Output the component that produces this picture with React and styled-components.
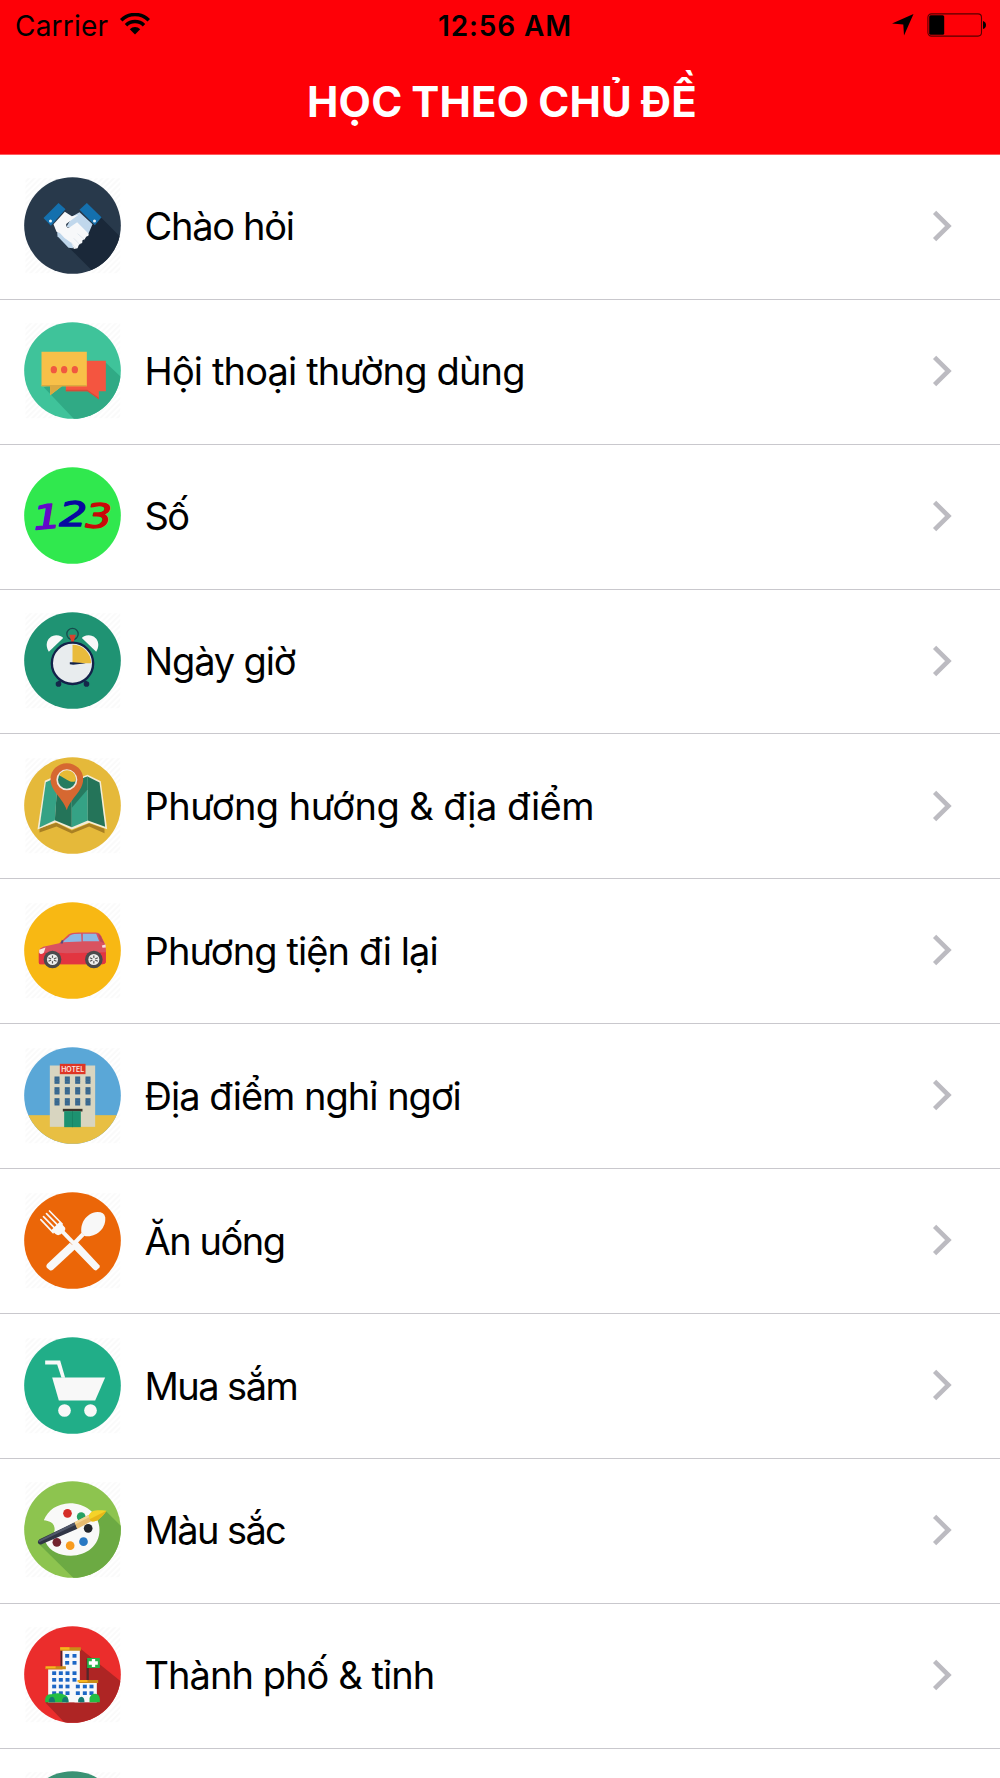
import React from 'react';
import styled, { createGlobalStyle } from 'styled-components';

// Each icon keeps its own drawing coordinates: a disc of radius 145 centred on (218, cy).
const Disc = ({ cy, color, plain, children }) => (
  <TopicIcon viewBox={`72.5 ${cy - 145.5} 291 291`}>
    <defs>
      <clipPath id={`disc-${color.slice(1)}`}>
        <circle cx="218" cy={cy} r="145" />
      </clipPath>
      <pattern id="hatch" width="12" height="12" patternUnits="userSpaceOnUse" patternTransform="rotate(45)">
        <rect width="6" height="12" fill="#fafafa" />
      </pattern>
    </defs>
    {!plain && <rect x="77" y={cy - 142} width="284" height="285" fill="url(#hatch)" />}
    <g clipPath={`url(#disc-${color.slice(1)})`}>
      <rect x="70" y={cy - 150} width="300" height="300" fill={color} />
      {children}
    </g>
  </TopicIcon>
);

const HandshakeIcon = () => (
  <Disc cy={211.5} color="#28394b">
    <path d="M300 184L365 249V357H287L205 275Z" fill="#1a2839" />
    <path d="M176 144L197 163L153 212L131 189Z" fill="#1470ae" />
    <path d="M261 144L305 187L285 211L239 164Z" fill="#1470ae" />
    <path d="M239 172L278 208L264 240L235 225L200 215L218 184Z" fill="#c0d7ec" />
    <path d="M172 232L188 226L222 262L219 280L206 278L173 244Z" fill="#bdd5ea" />
    <path
      d="M195 170L216 184L236 179L199 207Q198 221 210 217L232 202L265 235Q270 243 259 245L255 252L248 256L247 264L238 268L233 280L222 282L215 264L194 249L180 234L170 230L161 208Z"
      fill="#f7f8fa"
    />
    <path d="M233 236L254 254M222 250L240 269M213 262L227 279" stroke="#d7e0e8" strokeWidth="2" />
    <circle cx="152" cy="198" r="4.5" fill="#e4f2fb" />
    <circle cx="284" cy="198" r="4.5" fill="#e4f2fb" />
  </Disc>
);

const ChatIcon = () => (
  <Disc cy={646.5} color="#3fc39a">
    <path d="M318 623L370 672V800H230L132 697Z" fill="#30aa85" />
    <path d="M198 617H318V709H297V733L263 709H198Z" fill="#f45540" />
    <path d="M198 704H262L297 728V733L263 709H198Z" fill="#d54b38" />
    <path d="M125 590H261V694H186L151 721V694H125Z" fill="#f8c048" />
    <path d="M125 690H261V694H186L151 721V694H125Z" fill="#dba940" />
    <ellipse cx="162" cy="644" rx="9.5" ry="11" fill="#f05840" />
    <ellipse cx="193" cy="644" rx="9.5" ry="11" fill="#f05840" />
    <ellipse cx="225" cy="644" rx="9.5" ry="11" fill="#f05840" />
  </Disc>
);

const NumberIcon = () => (
  <Disc cy={211.5} color="#30e84e" plain>
    <Digit x="100" y="251" fill="#6408c8" stroke="#6408c8" textLength="84" transform="rotate(-5 140 220)">1</Digit>
    <Digit x="178" y="243" fill="#0808a0" stroke="#0808a0" textLength="84">2</Digit>
    <Digit x="257" y="248" fill="#c80808" stroke="#c80808" textLength="80">3</Digit>
  </Disc>
);

const ClockIcon = () => (
  <Disc cy={646.5} color="#1f9373">
    <path d="M147 620C132 597 145 572 169 571C181 571 187 576 190 579Z" fill="#f7f8f8" />
    <path d="M289 620C304 597 291 572 267 571C255 571 249 576 246 579Z" fill="#f7f8f8" />
    <circle cx="218" cy="567" r="17" fill="none" stroke="#164c4c" strokeWidth="4" />
    <path d="M208 569H228L221 592H215Z" fill="#d8422f" />
    <path d="M180 708L176 717M256 708L260 717" stroke="#14284a" strokeWidth="8" />
    <circle cx="176" cy="717" r="8.5" fill="#14284a" />
    <circle cx="260" cy="717" r="8.5" fill="#14284a" />
    <circle cx="218" cy="655" r="62" fill="#e8ecee" stroke="#13224a" strokeWidth="7" />
    <path d="M218 599A56 56 0 0 1 274 655H218Z" fill="#e9bb3c" />
    <path d="M210 652L220 652L258 655L220 659L210 658Z" fill="#13224a" />
  </Disc>
);

const MapIcon = () => (
  <Disc cy={196} color="#e5b93a">
    <path d="M119 264L170 248L216 271L268 249L314 266L314 279L268 259L216 280L170 259L119 277Z" fill="#a98023" />
    <path d="M135 122L174 104L216 122L263 104L303 123L322 267L268 248L216 268L168 246L113 268Z" fill="#f4ecd5" />
    <path d="M138 126L174 110L165 240L119 262Z" fill="#35a285" />
    <path d="M174 110L216 127V261L165 240Z" fill="#247459" />
    <path d="M216 127L263 109L264 241L216 261Z" fill="#35a285" />
    <path d="M263 109L299 127L316 260L264 241Z" fill="#247459" />
    <path d="M216 126L263 109V148L216 203Z" fill="#277a60" />
    <path d="M201 210C190 174 152 153 152 117A49 48 0 0 1 250 117C250 153 212 174 201 210Z" fill="#d66831" />
    <circle cx="201" cy="119" r="29" fill="#257b60" stroke="#f1e6dd" strokeWidth="5" />
    <path d="M178 106A26 26 0 0 1 227 123C210 130 202 116 178 106Z" fill="#e8ba35" />
  </Disc>
);

const CarWheel = ({ cx }) => (
  <g>
    <circle cx={cx} cy="658" r="26.5" fill="#4b4b4d" />
    <circle cx={cx} cy="658" r="16.5" fill="#eeeeec" />
    <path d={`M${cx} 646V670M${cx - 12} 653L${cx + 12} 663M${cx + 12} 653L${cx - 12} 663`} stroke="#555" strokeWidth="3.5" />
    <circle cx={cx} cy="658" r="5" fill="#eeeeec" />
  </g>
);

const CarIcon = () => (
  <Disc cy={631} color="#f8b813">
    <path
      d="M117 668V632Q119 624 130 620L178 609L206 583Q213 577 236 577H287Q299 577 303 586L316 612Q320 630 318 666Q316 672 308 672H125Q117 674 117 668Z"
      fill="#d95260"
    />
    <path d="M117 638Q160 636 200 639L318 636V666Q316 672 308 672H125Q117 674 117 668Z" fill="#e23540" />
    <path d="M187 606L212 585Q219 581 244 581L245 604Z" fill="#8cb9e4" />
    <path d="M249 581H289L298 603H249Z" fill="#8cb9e4" />
    <path d="M295 581L303 588L313 610L301 604Z" fill="#b94859" />
    <path d="M182 610L186 599L191 602L189 610Z" fill="#554a7d" />
    <path d="M118 629L137 622L132 638Q122 645 118 638Z" fill="#f6e9e5" />
    <path d="M306 616L317 613L318 622L308 623Z" fill="#f4dede" />
    <CarWheel cx={158} />
    <CarWheel cx={282} />
  </Disc>
);

const HotelIcon = () => (
  <Disc cy={196} color="#5aa7d7">
    <rect x="70" y="255" width="300" height="90" fill="#e8bf43" />
    <rect x="150" y="106" width="136" height="184" fill="#d8d5c0" />
    <rect x="180" y="101" width="77" height="31" fill="#de3525" />
    <HotelSign x="218.5" y="125" textLength="69" lengthAdjust="spacingAndGlyphs">HOTEL</HotelSign>
    {[139, 171, 204].map((y) =>
      [164, 195, 226, 257].map((x) => (
        <g key={`${x}-${y}`}>
          <rect x={x} y={y} width="15" height="22" fill="#36668d" />
          <path d={`M${x} ${y + 7.5}H${x + 15}M${x} ${y + 15}H${x + 15}`} stroke="#4c7898" strokeWidth="1.5" />
        </g>
      ))
    )}
    <rect x="189" y="236" width="59" height="8" fill="#3b352c" />
    <rect x="193" y="243" width="50" height="48" fill="#1d9270" />
    <path d="M218 243V291" stroke="#187b5e" strokeWidth="2" />
  </Disc>
);

const FoodIcon = () => (
  <Disc cy={630.5} color="#eb6608">
    <path d="M185 601L292 712" stroke="#f8f8f8" strokeWidth="12" />
    <path d="M223 640L231 632L300 706Q301 712 295 715L290 720Q284 721 281 717L214 648Z" fill="#f8f8f8" />
    <path d="M219 634L245 607L254 616L228 643Z" fill="#f8f8f8" />
    <path d="M210 637L229 654L161 717Q154 723 149 719L141 712Q137 707 142 701Z" fill="#f8f8f8" />
    <path
      d="M123 568L160 607M131 559L169 598M140 550L178 589M149 542L187 581"
      stroke="#f8f8f8"
      strokeWidth="5"
      strokeLinecap="round"
    />
    <path d="M154 600L180 574L196 592Q198 601 190 604L183 612Q174 617 168 612Z" fill="#f8f8f8" />
    <path d="M245 608C240 583 256 548 293 545Q313 545 316 560C320 592 291 623 254 617Z" fill="#f8f8f8" />
  </Disc>
);

const CartIcon = () => (
  <Disc cy={195} color="#21ae88">
    <path d="M136 120H181L196 172H185L172 132H136Z" fill="#f8f8f8" />
    <path d="M157 171H316L286 240H177Z" fill="#f8f8f8" />
    <circle cx="194" cy="270" r="19" fill="#f8f8f8" />
    <circle cx="272" cy="270" r="19" fill="#f8f8f8" />
  </Disc>
);

const PaletteIcon = () => (
  <Disc cy={629.5} color="#8dc44f">
    <path d="M318 574L375 630V780H226L118 674Z" fill="#6caa43" />
    <path
      d="M132 602C144 572 172 552 210 551C261 551 299 586 299 631C299 677 261 708 213 708C177 708 151 695 137 668L158 647Q166 638 164 624C161 609 151 605 132 602Z"
      fill="#f9f9f8"
    />
    <circle cx="203" cy="581" r="13" fill="#d52d27" />
    <circle cx="244" cy="591" r="13" fill="#27a163" />
    <circle cx="265" cy="626" r="13" fill="#23262c" />
    <circle cx="171" cy="668" r="13" fill="#72232e" />
    <circle cx="211" cy="678" r="13" fill="#f89b1d" />
    <circle cx="251" cy="666" r="13" fill="#2878c3" />
    <path d="M115 664Q112 670 119 674Q122 676 127 673L233 627L225 608L119 659Z" fill="#303545" />
    <path d="M115 663L225 608L228 615L118 668Z" fill="#51586a" />
    <path d="M224 608L266 586L277 603L232 628Z" fill="#e7bc70" />
    <path d="M224 608L266 586L269 592L227 614Z" fill="#f4d595" />
    <path d="M266 588C275 570 290 571 320 573C306 592 292 608 274 605Z" fill="#f5d329" />
    <path d="M269 599L320 573C306 592 292 608 274 605Z" fill="#e8b719" />
  </Disc>
);

const cityWindows = [
  [196, 163], [218, 163], [196, 184], [218, 184],
  [157, 215], [177, 215], [197, 215], [218, 215],
  [157, 235], [177, 235], [197, 235], [218, 235],
  [157, 255], [177, 255], [197, 255], [228, 255], [249, 255], [269, 255],
  [157, 275], [177, 275], [197, 275], [228, 275], [249, 275], [269, 275],
];

const CityIcon = () => (
  <Disc cy={224.5} color="#eb2d2c">
    <path d="M243 148L375 255V380H205L137 309Z" fill="#ae2524" />
    <path d="M182 153H188V201H182ZM262 177H267V241H260V177Z" fill="#54272a" />
    <rect x="188" y="151" width="52" height="157" fill="#f8f8fa" />
    <rect x="145" y="209" width="53" height="99" fill="#f8f8fa" />
    <rect x="224" y="250" width="67" height="58" fill="#f8f8fa" />
    <path d="M181 143H243V153H181Z" fill="#c98b17" />
    <path d="M181 143H209V150H181ZM137 200H168V208H137ZM233 241H264V248H233Z" fill="#f8b51d" />
    <path d="M168 200H198V209H137V206H168ZM264 241H295V250H237V247H264Z" fill="#c98b17" />
    {cityWindows.map(([x, y]) => (
      <rect key={`${x}-${y}`} x={x} y={y} width="12" height="11" fill="#1c66c5" />
    ))}
    <rect x="262" y="175" width="38" height="30" fill="#24b447" />
    <path d="M276 178H286V185H294V195H286V202H276V195H267V185H276Z" fill="#fff" />
    <path d="M136 308V297Q140 282 155 284Q174 277 190 284Q207 287 206 308Z" fill="#24bd43" />
    <path d="M269 308V295Q273 282 286 282Q300 284 300 299V308Z" fill="#24bd43" />
    <path
      d="M147 308V300Q150 291 157 291Q165 292 166 308ZM187 308V300Q190 291 197 291Q206 292 206 308ZM235 308V300Q238 291 245 291Q254 292 254 308Z"
      fill="#147970"
    />
  </Disc>
);

const NextIcon = () => <Disc cy={224.5} color="#3b9274" />;

const topics = [
  { label: 'Chào hỏi', icon: HandshakeIcon, tracking: -1.3 },
  { label: 'Hội thoại thường dùng', icon: ChatIcon, tracking: -0.85 },
  { label: 'Số', icon: NumberIcon, tracking: -1.6 },
  { label: 'Ngày giờ', icon: ClockIcon, tracking: -1.15 },
  { label: 'Phương hướng & địa điểm', icon: MapIcon, tracking: -0.55 },
  { label: 'Phương tiện đi lại', icon: CarIcon, tracking: -0.88 },
  { label: 'Địa điểm nghỉ ngơi', icon: HotelIcon, tracking: -1.0 },
  { label: 'Ăn uống', icon: FoodIcon, tracking: -1.45 },
  { label: 'Mua sắm', icon: CartIcon, tracking: -1.55 },
  { label: 'Màu sắc', icon: PaletteIcon, tracking: -1.6 },
  { label: 'Thành phố & tỉnh', icon: CityIcon, tracking: -0.95 },
  { label: '', icon: NextIcon, tracking: -0.8 },
];

const App = () => {
  return (
    <Screen>
      <GlobalStyle />
      <Header>
        <StatusBar>
          <StatusLeft>
            <span>Carrier</span>
            <svg width="30" height="22" viewBox="0 0 30 22">
              <path d="M1.2 7.2A19.5 19.5 0 0 1 28.8 7.2M6 12.2A12.8 12.8 0 0 1 24 12.2" fill="none" stroke="#000" strokeWidth="3.5" />
              <path d="M9.8 16.2A7.4 7.4 0 0 1 20.2 16.2L15 21.4Z" />
            </svg>
          </StatusLeft>
          <Time>12:56 AM</Time>
          <StatusRight>
            <svg width="22" height="22" viewBox="0 0 22 22">
              <path d="M21.5 0L12 21.5L11.3 10.4L0 9.6Z" />
            </svg>
            <svg width="60" height="24" viewBox="0 0 60 24">
              <rect x="0.9" y="0.9" width="53.6" height="22.2" rx="3.5" fill="none" stroke="#500" strokeWidth="1.1" />
              <rect x="2.2" y="2.2" width="15" height="19.5" rx="1.5" />
              <path d="M56 8Q59 9 59 12Q59 15 56 16Z" />
            </svg>
          </StatusRight>
        </StatusBar>
        <Title>HỌC THEO CHỦ ĐỀ</Title>
      </Header>

      <List>
        {topics.map(({ label, icon: Icon, tracking }, i) => (
          <Row key={i}>
            <Icon />
            <Label $tracking={tracking}>{label}</Label>
            <Chevron viewBox="0 0 20 32">
              <path d="M2.6 2.4L16.4 16L2.6 29.6" fill="none" stroke="#bcbbc1" strokeWidth="4.6" />
            </Chevron>
          </Row>
        ))}
      </List>
    </Screen>
  );
};

const GlobalStyle = createGlobalStyle`
  body {
    margin: 0;
    background: #fff;
  }
`;

const Screen = styled.div`
  width: 1000px;
  height: 1778px;
  overflow: hidden;
  background: #fff;
  color: #000;
  font-family: Inter, 'Liberation Sans', sans-serif;
`;

const Header = styled.header`
  box-sizing: border-box;
  height: 154.9px;
  background: #fe0007;
  border-bottom: 1px solid #ff5a5e;
`;

const StatusBar = styled.div`
  display: grid;
  grid-template-columns: 1fr auto 1fr;
  align-items: center;
  height: 50px;
  padding: 0 13px 0 15px;
  font-size: 28px;
`;

const StatusLeft = styled.div`
  display: flex;
  align-items: center;
  gap: 12px;
  letter-spacing: 0.2px;

  span {
    padding-top: 1px;
  }

  svg {
    margin-bottom: 2px;
  }
`;

const Time = styled.div`
  padding: 1px 0 0 8px;
  font-weight: 600;
  letter-spacing: 0.9px;
`;

const StatusRight = styled.div`
  display: flex;
  align-items: center;
  justify-content: flex-end;
  gap: 13px;
`;

const Title = styled.h1`
  margin: 0;
  padding: 26px 0 0 4px;
  color: #fff;
  font-size: 42px;
  font-weight: 700;
  line-height: 52px;
  letter-spacing: 0.25px;
  word-spacing: -1.5px;
  text-align: center;
`;

const List = styled.div`
  display: flex;
  flex-direction: column;
`;

const Row = styled.div`
  box-sizing: border-box;
  flex-shrink: 0;
  display: flex;
  align-items: center;
  height: 144.9px;
  padding: 0 48px 1.8px 24px;
  border-bottom: 1px solid #c9c8cd;
`;

const TopicIcon = styled.svg`
  flex-shrink: 0;
  width: 97px;
  height: 97px;
`;

const Label = styled.div`
  flex: 1;
  padding: 0.9px 0 0 23.5px;
  font-size: 38px;
  line-height: 48px;
  letter-spacing: ${({ $tracking }) => $tracking}px;
  white-space: nowrap;
`;

const Chevron = styled.svg`
  width: 20px;
  height: 32px;
`;

const Digit = styled.text.attrs({ lengthAdjust: 'spacingAndGlyphs' })`
  font-family: 'DejaVu Sans', sans-serif;
  font-size: 100px;
  font-style: italic;
  stroke-width: 4px;
  stroke-linejoin: round;
`;

const HotelSign = styled.text`
  fill: #fbe6e2;
  font-family: Inter, sans-serif;
  font-size: 22px;
  font-weight: 600;
  text-anchor: middle;
`;

export default App;
